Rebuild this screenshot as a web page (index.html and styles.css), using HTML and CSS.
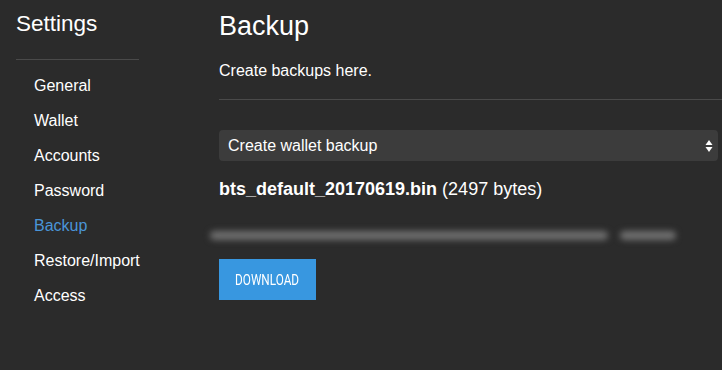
FILE: index.html
```html
<!DOCTYPE html>
<html lang="en">
<head>
    <meta charset="UTF-8">
    <title>Settings - Backup</title>
    <link rel="stylesheet" href="styles.css">
</head>
<body>
    <div class="page">
        <aside class="sidebar">
            <h2 class="sidebar-title">Settings</h2>
            <ul class="nav">
                <li>General</li>
                <li>Wallet</li>
                <li>Accounts</li>
                <li>Password</li>
                <li class="active">Backup</li>
                <li>Restore/Import</li>
                <li>Access</li>
            </ul>
        </aside>
        <main class="content">
            <h1 class="content-title">Backup</h1>
            <p class="lead">Create backups here.</p>
            <div class="select">
                <span>Create wallet backup</span>
                <svg class="arrows" width="8" height="14" viewBox="0 0 8 14">
                    <path d="M4 1 L7.5 6 L0.5 6 Z" fill="#fff"/>
                    <path d="M4 13 L7.5 8 L0.5 8 Z" fill="#fff"/>
                </svg>
            </div>
            <p class="file"><b>bts_default_20170619.bin</b> (2497 bytes)</p>
            <div class="hash">
                <span class="hash-main"></span>
                <span class="hash-tail"></span>
            </div>
            <button class="btn"><span>DOWNLOAD</span></button>
        </main>
    </div>
</body>
</html>
```

FILE: styles.css
```css
html, body {
    margin: 0;
    padding: 0;
    background-color: #2b2b2b;
    color: #fff;
    font-family: "Liberation Sans", Arial, sans-serif;
}

.page {
    display: flex;
    height: 370px;
    overflow: hidden;
}

.sidebar {
    width: 203px;
    flex-shrink: 0;
    padding-left: 16px;
}

.sidebar-title {
    font-size: 22.5px;
    font-weight: normal;
    margin: 11px 0 0 0;
    padding-bottom: 22px;
    width: 123px;
    border-bottom: 1px solid #4a4a4a;
}

.nav {
    list-style: none;
    margin: 0;
    padding: 16px 0 0 18px;
}

.nav li {
    font-size: 16px;
    height: 35px;
    line-height: 20px;
}

.nav li.active {
    color: #4a95d8;
}

.content {
    flex: 1;
    min-width: 0;
}

.content-title {
    font-size: 27px;
    font-weight: normal;
    margin: 11px 0 0 0;
}

.lead {
    font-size: 16px;
    margin: 20px 0 0 0;
    padding-bottom: 19px;
    border-bottom: 1px solid #4a4a4a;
}

.select {
    display: flex;
    align-items: center;
    justify-content: space-between;
    margin: 30px 4px 0 0;
    height: 31px;
    padding: 0 5px 0 9px;
    background-color: #3c3c3c;
    border-radius: 4px;
    font-size: 16px;
}

.file {
    font-size: 18px;
    margin: 18px 0 0 0;
}

.hash {
    display: flex;
    gap: 12px;
    margin: 31px 0 0 -9px;
    height: 9px;
    filter: blur(3px);
}

.hash-main {
    width: 398px;
    background-color: #6e6e6e;
    border-radius: 5px;
}

.hash-tail {
    width: 56px;
    background-color: #707070;
    border-radius: 5px;
}

.btn {
    display: block;
    margin-top: 19px;
    width: 97px;
    height: 41px;
    padding: 0;
    border: none;
    background-color: #3897e0;
    color: #fff;
    font-family: "Roboto", sans-serif;
    font-size: 14px;
}

.btn span {
    display: inline-block;
    transform: scaleX(0.84);
}
```
